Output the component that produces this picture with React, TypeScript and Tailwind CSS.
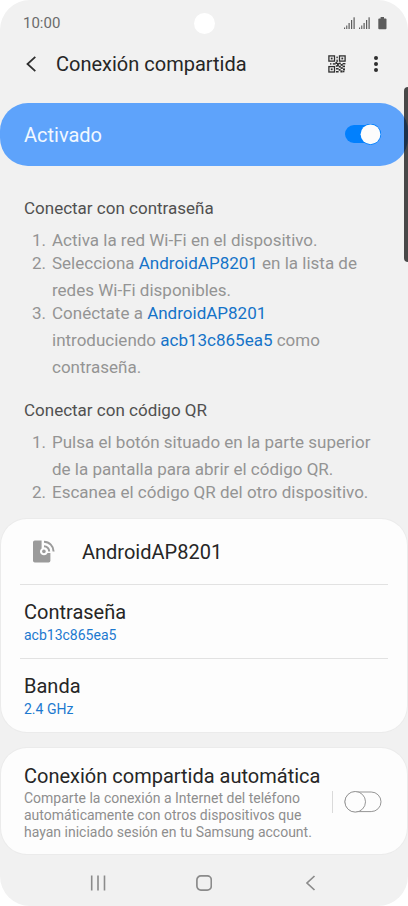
import { useState } from "react";
import type { ReactNode } from "react";

type SwitchProps = {
  label: string;
  checked: boolean;
  onChange: (value: boolean) => void;
};

function Switch({ label, checked, onChange }: SwitchProps) {
  return (
    <label className="relative flex h-[22px] w-[38px] shrink-0 cursor-pointer items-center">
      <input
        type="checkbox"
        role="switch"
        aria-label={label}
        checked={checked}
        onChange={(event) => onChange(event.target.checked)}
        className="absolute inset-0 m-0 cursor-pointer opacity-0"
      />
      <svg viewBox="0 0 38 22" className="pointer-events-none h-[22px] w-[38px]" aria-hidden="true">
        {checked ? (
          <>
            <rect x="1" y="1" width="36" height="18" rx="9" fill="#0280fd" />
            <circle cx="26.5" cy="10.3" r="10.6" fill="#0280fd" />
            <circle cx="26.5" cy="10.3" r="9.9" fill="#fcfcfc" />
          </>
        ) : (
          <>
            <rect x="1" y="1" width="36" height="19.6" rx="9.8" fill="#fdfdfd" stroke="#959595" />
            <circle cx="11.2" cy="10.8" r="10.3" fill="#fdfdfd" stroke="#959595" />
          </>
        )}
      </svg>
    </label>
  );
}

function SignalIcon() {
  return (
    <svg viewBox="0 0 11 12" className="h-3 w-[11px]" fill="#5c5c5c" aria-hidden="true">
      <rect x="0" y="10.5" width="1.1" height="1.5" />
      <rect x="2.2" y="8.5" width="1.1" height="3.5" />
      <rect x="4.5" y="6" width="1.2" height="6" />
      <rect x="7" y="3" width="1.2" height="9" />
      <rect x="9.5" y="0.3" width="1.2" height="11.7" />
    </svg>
  );
}

function BatteryIcon() {
  return (
    <svg viewBox="0 0 9 13" className="h-[13px] w-[9px]" fill="#5c5c5c" aria-hidden="true">
      <path d="M2.6 0h3.4v1.4h1.6a.9.9 0 0 1 .9.9v9a.9.9 0 0 1-.9.9H1.2a.9.9 0 0 1-.9-.9v-9a.9.9 0 0 1 .9-.9h1.4z" />
    </svg>
  );
}

function QrIcon() {
  return (
    <svg viewBox="0 0 18 18" className="h-[18px] w-[18px]" aria-hidden="true">
      <g fill="none" stroke="#2f2f2f" strokeWidth="1.3">
        <rect x="0.9" y="0.9" width="5.6" height="5.2" />
        <rect x="11.5" y="0.9" width="5.6" height="5.2" />
        <rect x="0.9" y="11.6" width="5.6" height="5.4" />
      </g>
      <g fill="#2f2f2f">
        <rect x="2.8" y="2.6" width="1.8" height="1.8" />
        <rect x="13.4" y="2.6" width="1.8" height="1.8" />
        <rect x="2.8" y="13.4" width="1.8" height="1.8" />
        <rect x="8.4" y="1.6" width="1.4" height="1.6" />
        <rect x="8.4" y="4.6" width="1.4" height="2.4" />
        <rect x="2" y="8.2" width="1.4" height="1.4" />
        <rect x="4.8" y="8.2" width="2.8" height="1.4" />
        <rect x="7.4" y="7" width="1.8" height="2" />
        <rect x="9" y="8" width="1.9" height="3.4" />
        <rect x="7.8" y="10.2" width="1.6" height="1.6" />
        <rect x="10.8" y="7.6" width="2" height="1.6" />
        <rect x="14.6" y="8" width="2.8" height="1.4" />
        <rect x="12.6" y="9" width="2.2" height="1.8" />
        <rect x="10.8" y="10.8" width="2" height="1.8" />
        <rect x="14.6" y="10.6" width="2.4" height="1.6" />
        <rect x="12.6" y="12.2" width="2.2" height="1.7" />
        <rect x="8" y="13" width="2.6" height="1.5" />
        <rect x="10.6" y="14" width="2" height="1.7" />
        <rect x="15" y="13.4" width="2" height="2" />
        <rect x="8" y="16" width="2.6" height="1.5" />
        <rect x="12.4" y="15.4" width="2.2" height="2.1" />
        <rect x="14.8" y="15.8" width="1.6" height="1.5" />
      </g>
    </svg>
  );
}

function HotspotIcon() {
  return (
    <svg viewBox="0 0 22 23" className="h-[23px] w-[22px]" aria-hidden="true">
      <path
        d="M1.8 .5H8.6v8a4.1 4.1 0 0 0-1.2 4.8a4.1 4.1 0 0 0 7.2-.2h2.8v7.6a1.8 1.8 0 0 1-1.8 1.8H1.8A1.8 1.8 0 0 1 0 20.7V2.3A1.8 1.8 0 0 1 1.8 .5z"
        fill="#9b9b9b"
      />
      <circle cx="10.9" cy="11.4" r="1.8" fill="#9b9b9b" />
      <g fill="none" stroke="#9b9b9b" strokeWidth="2">
        <path d="M11 6.2a5.2 5.2 0 0 1 5.2 5.2" />
        <path d="M11 1.8a9.6 9.6 0 0 1 9.6 9.6" />
      </g>
    </svg>
  );
}

function Accent({ children }: { children: ReactNode }) {
  return <span className="text-[#1573c8]">{children}</span>;
}

function Steps({ title, steps }: { title: string; steps: ReactNode[] }) {
  return (
    <section>
      <h2 className="text-[17px] leading-6 text-[#505050]">{title}</h2>
      <ol className="mt-[7px] pr-4 text-[17px] leading-[27px] text-[#949494]">
        {steps.map((step, index) => (
          <li key={index} className="-mb-1 flex">
            <span className="w-[28px] shrink-0 pl-2">{index + 1}.</span>
            <span>{step}</span>
          </li>
        ))}
      </ol>
    </section>
  );
}

function Setting({ name, value }: { name: string; value: string }) {
  return (
    <button type="button" className="mx-[19px] flex flex-col border-t border-[#e2e2e2] px-1 pt-3.5 pb-[13px] text-left">
      <span className="text-[20px] leading-[26px] text-[#262626]">{name}</span>
      <span className="text-sm leading-5 text-[#1c79cf]">{value}</span>
    </button>
  );
}

export default function App() {
  const [enabled, setEnabled] = useState(true);
  const [auto, setAuto] = useState(false);

  return (
    <div className="bg-white font-[Roboto,sans-serif]">
      <div className="relative flex min-h-screen flex-col overflow-hidden rounded-[30px] bg-[#f1f1f1]">
        <div className="grid h-[46px] grid-cols-3 items-center pr-[21px] pl-[23px] text-[#6b6b6b]">
          <span className="text-[15px] leading-5">10:00</span>
          <span className="h-[21px] w-[21px] justify-self-center rounded-full bg-white" />
          <div className="flex items-center justify-end gap-1">
            <SignalIcon />
            <SignalIcon />
            <span className="pl-1">
              <BatteryIcon />
            </span>
          </div>
        </div>

        <header className="flex h-9 items-center pr-5 pl-5 text-[#262626]">
          <button type="button" aria-label="Atrás" className="flex h-9 w-9 items-center pl-1.5">
            <svg viewBox="0 0 10 16" className="h-4 w-2.5" fill="none" stroke="#2f2f2f" strokeWidth="1.8" aria-hidden="true">
              <path d="M9.3 .8L1.5 8l7.8 7.2" />
            </svg>
          </button>
          <h1 className="flex-1 text-[20px] leading-7">Conexión compartida</h1>
          <button type="button" aria-label="Código QR" className="flex h-9 items-center">
            <QrIcon />
          </button>
          <button type="button" aria-label="Más opciones" className="ml-[18px] flex h-9 w-6 items-center justify-center">
            <svg viewBox="0 0 4 17" className="h-[17px] w-1" fill="#2f2f2f" aria-hidden="true">
              <circle cx="2" cy="2" r="2" />
              <circle cx="2" cy="8" r="2" />
              <circle cx="2" cy="14" r="2" />
            </svg>
          </button>
        </header>

        <div className="mt-[21px] flex h-[63px] items-center justify-between rounded-[28px] bg-[#5ea3fb] pr-[26px] pl-6">
          <span className="text-[20px] leading-6 text-[#f1f8ff]">Activado</span>
          <Switch label="Activado" checked={enabled} onChange={setEnabled} />
        </div>

        <main className="flex flex-col gap-[21px] pt-[30px] pr-5 pl-6">
          <Steps
            title="Conectar con contraseña"
            steps={[
              "Activa la red Wi-Fi en el dispositivo.",
              <>
                Selecciona <Accent>AndroidAP8201</Accent> en la lista de redes Wi-Fi disponibles.
              </>,
              <>
                Conéctate a <Accent>AndroidAP8201</Accent> introduciendo <Accent>acb13c865ea5</Accent> como contraseña.
              </>,
            ]}
          />
          <Steps
            title="Conectar con código QR"
            steps={[
              "Pulsa el botón situado en la parte superior de la pantalla para abrir el código QR.",
              "Escanea el código QR del otro dispositivo.",
            ]}
          />
        </main>

        <section className="mx-px mt-[17px] flex flex-col rounded-[26px] bg-[#fdfdfd] ring-1 ring-[#ebebeb]">
          <button type="button" className="flex h-[65px] items-center gap-[27px] pl-8 text-left">
            <HotspotIcon />
            <span className="text-[20px] leading-6 text-[#262626]">AndroidAP8201</span>
          </button>
          <Setting name="Contraseña" value="acb13c865ea5" />
          <Setting name="Banda" value="2.4 GHz" />
        </section>

        <section className="mx-px mt-4 flex items-center rounded-[26px] bg-[#fdfdfd] pt-[15px] pr-[25px] pb-[13px] pl-[23px] ring-1 ring-[#ebebeb]">
          <div className="flex-1">
            <h2 className="text-[20px] leading-[27px] text-[#262626]">Conexión compartida automática</h2>
            <p className="text-sm leading-[17px] text-[#8e8e8e]">
              Comparte la conexión a Internet del teléfono automáticamente con otros dispositivos que hayan iniciado
              sesión en tu Samsung account.
            </p>
          </div>
          <div className="flex items-center gap-[11px]">
            <span className="h-[22px] w-px bg-[#dadada]" />
            <Switch label="Conexión compartida automática" checked={auto} onChange={setAuto} />
          </div>
        </section>

        <nav className="mt-auto flex h-[52px] items-center justify-between px-[90px] pt-1.5">
          <button type="button" aria-label="Recientes">
            <svg viewBox="0 0 16 16" className="h-4 w-4" fill="none" stroke="#8b8b8b" strokeWidth="1.6" aria-hidden="true">
              <path d="M1.7 .5v15M8 .5v15M14.5 .5v15" />
            </svg>
          </button>
          <button type="button" aria-label="Inicio">
            <svg viewBox="0 0 16 16" className="h-4 w-4" fill="none" stroke="#8b8b8b" strokeWidth="1.7" aria-hidden="true">
              <rect x="0.9" y="0.9" width="14.4" height="14.2" rx="4" />
            </svg>
          </button>
          <button type="button" aria-label="Volver">
            <svg viewBox="0 0 16 16" className="h-4 w-4" fill="none" stroke="#8b8b8b" strokeWidth="1.7" aria-hidden="true">
              <path d="M12.5 1L5 8l7.5 7" />
            </svg>
          </button>
        </nav>

        {/* scroll thumb on the right edge */}
        <span className="absolute top-[87px] right-0 h-[175px] w-1 rounded-l bg-black/70" />
      </div>
    </div>
  );
}
